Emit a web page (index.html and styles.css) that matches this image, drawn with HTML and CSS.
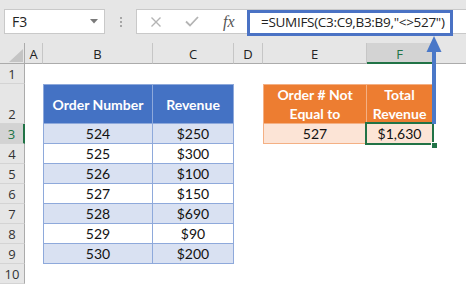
FILE: index.html
```html
<!DOCTYPE html>
<html>
<head>
<meta charset="utf-8">
<link rel="stylesheet" href="styles.css">
</head>
<body>
<div class="app">
  <div class="toolbar">
    <div class="namebox">
      <span class="name">F3</span>
      <svg class="caret" width="8" height="5" viewBox="0 0 8 5"><path d="M0 0H8L4 4.5Z" fill="#7a7a7a"/></svg>
    </div>
    <div class="dots"><i></i><i></i><i></i></div>
    <div class="fbar">
      <div class="ficons">
        <svg width="12" height="12" viewBox="0 0 12 12"><path d="M1.5 1.5L10.5 10.5M10.5 1.5L1.5 10.5" stroke="#b4b4b4" stroke-width="1.4" fill="none"/></svg>
        <svg width="14" height="11" viewBox="0 0 14 11"><path d="M1 5.5L5 9.5L13 1" stroke="#b4b4b4" stroke-width="1.8" fill="none"/></svg>
        <span class="fx">fx</span>
      </div>
      <div class="formula">=SUMIFS(C3:C9,B3:B9,"&lt;&gt;527")</div>
    </div>
  </div>

  <div class="sheet">
    <div class="corner"><svg width="14" height="13" viewBox="0 0 14 13"><path d="M14 0V13H0Z" fill="#c4c4c4"/></svg></div>
    <div class="ch">A</div>
    <div class="ch">B</div>
    <div class="ch">C</div>
    <div class="ch">D</div>
    <div class="ch">E</div>
    <div class="ch ch-sel">F</div>
    <div class="ch ch-last"></div>

    <div class="rh r1">1</div>
    <div class="rh r2">2</div>
    <div class="rh r3 rh-sel">3</div>
    <div class="rh r4">4</div>
    <div class="rh r5">5</div>
    <div class="rh r6">6</div>
    <div class="rh r7">7</div>
    <div class="rh r8">8</div>
    <div class="rh r9">9</div>
    <div class="rh r10">10</div>

    <div class="tbl blue">
      <div class="c hd">Order Number</div>
      <div class="c hd">Revenue</div>
      <div class="c band">524</div><div class="c band">$250</div>
      <div class="c">525</div><div class="c">$300</div>
      <div class="c band">526</div><div class="c band">$100</div>
      <div class="c">527</div><div class="c">$150</div>
      <div class="c band">528</div><div class="c band">$690</div>
      <div class="c">529</div><div class="c">$90</div>
      <div class="c band">530</div><div class="c band">$200</div>
    </div>

    <div class="tbl orange">
      <div class="c hd">Order # Not<br>Equal to</div>
      <div class="c hd">Total<br>Revenue</div>
      <div class="c band">527</div>
      <div class="c band sel">$1,630</div>
    </div>
  </div>

  <svg class="arrow" width="16" height="88" viewBox="0 0 16 88">
    <path d="M8 0L15.5 16H0.5Z" fill="#4a78c8"/>
    <rect x="6" y="15" width="4" height="73" fill="#4a78c8"/>
  </svg>
</div>
</body>
</html>
```

FILE: styles.css
```css
html, body {
  margin: 0;
  padding: 0;
  background: #ffffff;
  overflow: hidden;
}

.app {
  position: relative;
  width: 466px;
  height: 285px;
  font-family: Lato, "Open Sans", sans-serif;
}

/* ---------- toolbar ---------- */
.toolbar {
  height: 43px;
  background: #e6e6e6;
  display: flex;
  align-items: flex-start;
  padding-top: 9px;
  box-sizing: border-box;
}

.namebox {
  margin-left: 4px;
  width: 101px;
  height: 25px;
  box-sizing: border-box;
  background: #ffffff;
  border: 1px solid #c9c9c9;
  display: flex;
  align-items: center;
  justify-content: space-between;
  padding: 0 6px 0 7px;
  font-family: "Open Sans", "Noto Sans", sans-serif;
  font-size: 14px;
  color: #222;
}

.dots {
  width: 31px;
  height: 25px;
  display: flex;
  flex-direction: column;
  align-items: center;
  justify-content: center;
  gap: 2px;
}
.dots i {
  display: block;
  width: 2px;
  height: 2px;
  background: #a6a6a6;
}

.fbar {
  flex: 1;
  height: 25px;
  display: flex;
  align-items: flex-start;
  background: #ffffff;
  border: 1px solid #c9c9c9;
  border-right: none;
  box-sizing: border-box;
}

.ficons {
  width: 110px;
  height: 23px;
  display: flex;
  align-items: center;
  padding-left: 13px;
  gap: 23px;
  box-sizing: border-box;
}
.fx {
  font-family: "Liberation Serif", serif;
  font-style: italic;
  font-size: 16px;
  color: #555;
  margin-left: 1px;
}

.formula {
  width: 206px;
  height: 26px;
  box-sizing: border-box;
  border: 3px solid #4a72c4;
  padding-left: 11px;
  font-family: "Open Sans", "Noto Sans", sans-serif;
  font-size: 13.5px;
  letter-spacing: -0.3px;
  line-height: 19px;
  color: #222;
  white-space: nowrap;
  overflow: hidden;
  background: #fff;
}

/* ---------- sheet grid ---------- */
.sheet {
  display: grid;
  grid-template-columns: 25px 18px 110px 81px 29px 104px 66px 33px;
  grid-template-rows: 21px 20px 40px repeat(8, 20px) 1px;
}

.corner {
  background: #e6e6e6;
  border-right: 1px solid #ababab;
  border-bottom: 1px solid #ababab;
  box-sizing: border-box;
  display: flex;
  align-items: flex-end;
  justify-content: flex-end;
  padding: 0 1px 1px 0;
}

.ch {
  background: #e6e6e6;
  border-right: 1px solid #c6c6c6;
  border-bottom: 1px solid #ababab;
  box-sizing: border-box;
  display: flex;
  align-items: center;
  justify-content: center;
  padding-top: 2px;
  font-family: "Open Sans", "Noto Sans", sans-serif;
  font-size: 13px;
  color: #222;
}
.ch-sel {
  background: #d3d3d3;
  color: #217346;
  border-bottom: 2px solid #217346;
}
.ch-last {
  border-right: none;
}

.rh {
  grid-column: 1;
  background: #e6e6e6;
  border-right: 1px solid #ababab;
  border-bottom: 1px solid #d4d4d4;
  box-sizing: border-box;
  display: flex;
  align-items: flex-end;
  justify-content: center;
  font-family: "Open Sans", "Noto Sans", sans-serif;
  font-size: 13px;
  line-height: 18px;
  color: #333;
}
.r1 { grid-row: 2; }
.r2 { grid-row: 3; }
.r3 { grid-row: 4; }
.r4 { grid-row: 5; }
.r5 { grid-row: 6; }
.r6 { grid-row: 7; }
.r7 { grid-row: 8; }
.r8 { grid-row: 9; }
.r9 { grid-row: 10; }
.r10 { grid-row: 11; }
.rh-sel {
  background: #d3d3d3;
  color: #217346;
  border-right: 2px solid #217346;
}

/* ---------- tables ---------- */
.tbl {
  display: grid;
  font-family: Lato, "Open Sans", sans-serif;
  font-size: 14px;
  color: #111;
}
.blue {
  grid-column: 3 / 5;
  grid-row: 3 / 11;
  grid-template-columns: 110px 81px;
  grid-template-rows: 40px repeat(7, 20px);
  --line: #8ea9db;
  --head: #4472c4;
  --band: #d9e1f2;
}
.orange {
  grid-column: 6 / 8;
  grid-row: 3 / 5;
  grid-template-columns: 104px 66px;
  grid-template-rows: 40px 20px;
  --line: #f4b084;
  --head: #ed7d31;
  --band: #fce4d6;
}

.c {
  box-sizing: border-box;
  border-right: 1px solid var(--line);
  border-bottom: 1px solid var(--line);
  display: flex;
  align-items: center;
  justify-content: center;
  text-align: center;
  line-height: 19px;
  background: #fff;
}
.c:nth-child(odd) {
  border-left: 1px solid var(--line);
}
.hd {
  background: var(--head);
  color: #fff;
  font-weight: 700;
  border-top: 1px solid var(--line);
}
.band {
  background: var(--band);
}

.sel {
  position: relative;
}
.sel::after {
  content: "";
  position: absolute;
  left: -2px;
  top: -2px;
  right: -2px;
  bottom: -2px;
  border: 2px solid #217346;
}
.sel::before {
  content: "";
  position: absolute;
  right: -5px;
  bottom: -5px;
  width: 5px;
  height: 5px;
  background: #217346;
  border: 1px solid #fff;
  border-right: none;
  border-bottom: none;
  z-index: 2;
}

/* ---------- annotation arrow ---------- */
.arrow {
  position: absolute;
  left: 426px;
  top: 36px;
}
```
